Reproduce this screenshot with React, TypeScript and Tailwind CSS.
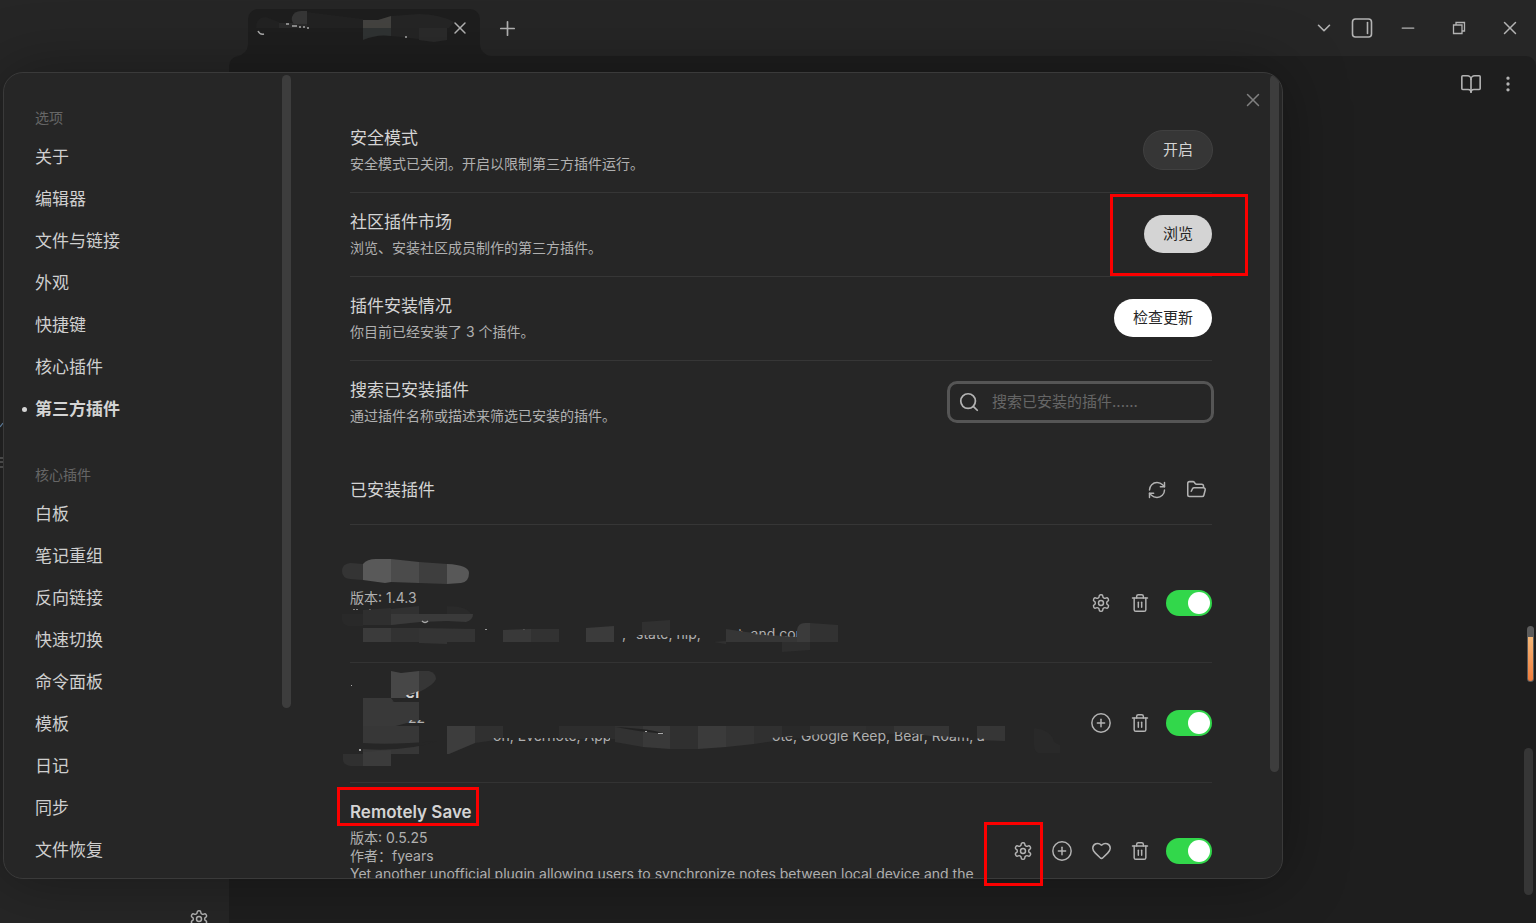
import React, { useState } from "react";
import {
  BookOpen,
  ChevronDown,
  CirclePlus,
  FolderOpen,
  Heart,
  Minus,
  MoreVertical,
  Plus,
  RefreshCw,
  Search,
  Trash2,
  X,
} from "lucide-react";

const optionItems = ["关于", "编辑器", "文件与链接", "外观", "快捷键", "核心插件", "第三方插件"];
const coreItems = ["白板", "笔记重组", "反向链接", "快速切换", "命令面板", "模板", "日记", "同步", "文件恢复"];

function Gear() {
  return (
    <svg width="20" height="20" viewBox="0 0 24 24" fill="none" stroke="currentColor" strokeWidth="1.75" strokeLinecap="round" strokeLinejoin="round" aria-hidden="true">
      <path d="M12.22 2h-.44a2 2 0 0 0-2 2v.18a2 2 0 0 1-1 1.73l-.43.25a2 2 0 0 1-2 0l-.15-.08a2 2 0 0 0-2.73.73l-.22.38a2 2 0 0 0 .73 2.73l.15.1a2 2 0 0 1 1 1.72v.51a2 2 0 0 1-1 1.74l-.15.09a2 2 0 0 0-.73 2.73l.22.38a2 2 0 0 0 2.73.73l.15-.08a2 2 0 0 1 2 0l.43.25a2 2 0 0 1 1 1.73V20a2 2 0 0 0 2 2h.44a2 2 0 0 0 2-2v-.18a2 2 0 0 1 1-1.73l.43-.25a2 2 0 0 1 2 0l.15.08a2 2 0 0 0 2.73-.73l.22-.39a2 2 0 0 0-.73-2.73l-.15-.08a2 2 0 0 1-1-1.74v-.5a2 2 0 0 1 1-1.74l.15-.09a2 2 0 0 0 .73-2.73l-.22-.38a2 2 0 0 0-2.73-.73l-.15.08a2 2 0 0 1-2 0l-.43-.25a2 2 0 0 1-1-1.73V4a2 2 0 0 0-2-2z" />
      <circle cx="12" cy="12" r="3" />
    </svg>
  );
}

function IconButton({ label, children }: { label: string; children: React.ReactNode }) {
  return (
    <button type="button" aria-label={label} className="flex h-8 w-8 items-center justify-center text-[#b3b3b3]">
      {children}
    </button>
  );
}

function Toggle({ label }: { label: string }) {
  const [on, setOn] = useState(true);
  return (
    <label
      className={
        on
          ? "relative ml-[3px] flex h-[26px] w-[46px] cursor-pointer items-center justify-end rounded-full bg-[#32d74b] p-[2px]"
          : "relative ml-[3px] flex h-[26px] w-[46px] cursor-pointer items-center rounded-full bg-[#4a4a4a] p-[2px]"
      }
    >
      <input type="checkbox" aria-label={label} checked={on} onChange={() => setOn(!on)} className="absolute inset-0 cursor-pointer opacity-0" />
      <span className="h-[22px] w-[22px] rounded-full bg-white" />
    </label>
  );
}

function NavGroup({ title, items, active }: { title: string; items: string[]; active?: string }) {
  return (
    <section>
      <h2 className="flex h-[34px] items-center pb-[2px] pl-[31px] text-[14px] text-[#666666]">{title}</h2>
      <ul>
        {items.map((item) => (
          <li key={item}>
            <button
              type="button"
              className={
                item === active
                  ? "flex h-[42px] w-full items-center pt-[3px] pl-[18px] text-[17px] font-bold text-[#d4d4d4]"
                  : "flex h-[42px] w-full items-center pt-[3px] pl-[31px] text-[17px] text-[#cfcfcf]"
              }
            >
              {item === active && <span className="mr-2 h-[5px] w-[5px] rounded-full bg-[#d4d4d4]" />}
              {item}
            </button>
          </li>
        ))}
      </ul>
    </section>
  );
}

function SettingRow({ title, desc, last, children }: { title: string; desc: string; last?: boolean; children: React.ReactNode }) {
  return (
    <div className={last ? "flex items-center justify-between border-b border-transparent pt-[17px] pb-[19px]" : "flex items-center justify-between border-b border-[#363636] pt-[17px] pb-[19px]"}>
      <div>
        <h3 className="text-[17px] leading-6 text-[#d4d4d4]">{title}</h3>
        <p className="mt-[5px] text-[14px] leading-[18px] text-[#b0b0b0]">{desc}</p>
      </div>
      {children}
    </div>
  );
}

function FirstPluginSmudge() {
  return (
    <svg className="pointer-events-none absolute top-0 -left-2" width="520" height="120" viewBox="342 543 520 120" fontFamily="Inter, sans-serif" fontSize="14" aria-hidden="true">
      <clipPath id="p1-title">
        <path d="M350 563 L363 564 Q367 559 376 559 L391 559 L419 562 L447 564 Q469 565 469 573 Q469 582 461 583 L447 584 L419 583 L391 582 L385 583 L363 580 L350 579 Q342 578 342 571 Q342 564 350 563Z" />
      </clipPath>
      <g clipPath="url(#p1-title)">
        <path fill="#343434" d="M342 555h21v32h-21z" />
        <path fill="#595959" d="M363 555h28v32h-28z" />
        <path fill="#4b4b4b" d="M391 555h28v32h-28z" />
        <path fill="#3e3e3e" d="M419 555h28v32h-28z" />
        <path fill="#585858" d="M447 555h22v32h-22z" />
      </g>
      <path fill="#888" d="M353 609h2v1h-2zM356 609h2v1h-2zM369 609h2v1h-2z" />
      <path fill="#292929" d="M342 614h21v12h-15q-6-2-6-6z" />
      <path fill="#2f2f2f" d="M363 610l28-2v17h-28z" />
      <path fill="#313131" d="M391 609l28-3v15l-28 4z" />
      <path fill="#2a2a2a" d="M447 606q20 0 24 8h-24z" />
      <path fill="#3a3a3a" d="M391 614h82q0 6-7 8l-19-1-27 1-29 3z" />
      <path fill="none" stroke="#aaa" strokeWidth="1.3" d="M422 621q3 3 6 0" />
      <path fill="#3b3b3b" d="M363 628h28v14h-28z" />
      <path fill="#323232" d="M391 628h28v14h-28z" />
      <path fill="#343434" d="M419 628l56 1v13h-28v2l-28-1z" />
      <path fill="#999" d="M485 629h2v1h-2zM523 629h2v1h-2zM530 629h2v1h-2z" />
      <path fill="#393939" d="M503 630l28-1v13h-28z" />
      <path fill="#323232" d="M531 629h28v13h-28z" />
      <path fill="#3b3b3b" d="M586 628l28-2v16h-28z" />
      <path fill="#303030" d="M642 622l28-2v16h-28z" />
      <clipPath id="p1-low">
        <path d="M618 635h86v9h-86z" />
      </clipPath>
      <g clipPath="url(#p1-low)" fill="#b0b0b0">
        <text x="622" y="639">,</text>
        <text x="636" y="639">state, nip,</text>
      </g>
      <path fill="#303030" d="M714 642l12-1v3z" />
      <path fill="#363636" d="M726 629l20 3 36 4h15v6h-71z" />
      <clipPath id="p1-high">
        <path d="M736 626h62v11l-22-1-22-2-18-4z" />
      </clipPath>
      <text x="738" y="639" fill="#b0b0b0" clipPath="url(#p1-high)">t, and com</text>
      <path fill="#3b3b3b" d="M797 642v-12q1-7 8-7h5v19z" />
      <path fill="#323232" d="M810 623l28 2v17h-28z" />
      <path fill="#2e2e2e" d="M782 642h28v8l-28 2z" />
    </svg>
  );
}

function SecondPluginSmudge() {
  return (
    <svg className="pointer-events-none absolute top-0 -left-2" width="720" height="120" viewBox="342 663 720 120" fontFamily="Inter, sans-serif" fontSize="14" aria-hidden="true">
      <path fill="#474747" d="M391 671l10 2 18-2v20l-14 7h-14z" />
      <path fill="#363636" d="M419 671h10q7 2 7 8-2 6-17 13z" />
      <path fill="#aaa" d="M351 685h1v1h-1zM367 742h1v1h-1zM359 749h2v2h-2z" />
      <path fill="#393939" d="M363 698h28l3 4h25v24h-56z" />
      <path fill="#262626" d="M392 702l20-4 8 2v2zM392 727l15-4h14v3z" />
      <path fill="#373737" d="M363 726h56v28h-56z" />
      <path fill="#262626" d="M363 743q30 2 74-2-30 11-74 8z" />
      <clipPath id="p2-name">
        <path d="M404 696l15-5v8h-15z" />
      </clipPath>
      <text x="405" y="698" fontSize="17" fontWeight="600" fill="#d4d4d4" clipPath="url(#p2-name)">er</text>
      <clipPath id="p2-version">
        <path d="M406 720h20v4h-20z" />
      </clipPath>
      <text x="408" y="723" fill="#b0b0b0" clipPath="url(#p2-version)">22</text>
      <path fill="#3b3b3b" d="M363 752l28-2v16h-28z" />
      <path fill="#303030" d="M343 754h20v12h-12q-8-1-8-6z" />
      <path fill="#3d3d3d" d="M447 726h28v17l-26 11h-2z" />
      <path fill="#303030" d="M475 726h28v13l-28 4z" />
      <path fill="#2d2d2d" d="M559 726h56v13h-56z" />
      <path fill="#323232" d="M615 726h28v21l-28-5z" />
      <path fill="#393939" d="M643 726h27v23l-27-2z" />
      <path fill="#303030" d="M670 726h28v23h-28z" />
      <path fill="#3b3b3b" d="M698 726h28v21l-28 2z" />
      <path fill="#353535" d="M726 726h28v18l-28 3z" />
      <path fill="#303030" d="M754 726h28v14l-28 4z" />
      <path fill="#292929" d="M782 726h28v11l-28 3z" />
      <path fill="#303030" d="M810 726h56v8l-56 3z" />
      <path fill="#2d2d2d" d="M866 726h28v8l-28-1z" />
      <path fill="#353535" d="M894 726h55v14q-20-6-55-7z" />
      <path fill="#363636" d="M977 726h28v15l-28-1z" />
      <path fill="#222222" d="M615 727q40 2 50 7-25-2-50-7z" />
      <path fill="#aaa" d="M645 731h2v1h-2zM658 733h5v1h-5z" />
      <clipPath id="p2-left">
        <path d="M490 738h120v7H490z" />
      </clipPath>
      <text x="493" y="741" fill="#b0b0b0" clipPath="url(#p2-left)">on, Evernote, App</text>
      <clipPath id="p2-right">
        <path d="M770 738l40-3 40-3h48l40 4 50 3v6H770z" />
      </clipPath>
      <text x="772" y="741" fill="#b0b0b0" clipPath="url(#p2-right)">ote, Google Keep, Bear, Roam, a</text>
      <path fill="#292929" d="M1034 728q18 2 20 14l6 3v8h-22q-4-2-4-8z" />
    </svg>
  );
}

function Modal() {
  return (
    <div role="dialog" aria-label="设置" className="absolute top-[72px] right-[253px] bottom-11 left-[3px] flex overflow-hidden rounded-[20px] border border-[#3a3a3a] bg-[#262626] shadow-[0_0_64px_rgba(0,0,0,0.35)]">
      <nav className="flex w-[287px] shrink-0 justify-between">
        <div className="flex flex-1 flex-col gap-[29px] pt-7">
          <NavGroup title="选项" items={optionItems} active="第三方插件" />
          <NavGroup title="核心插件" items={coreItems} />
        </div>
        <div className="mt-[2px] h-[633px] w-[9px] rounded-full bg-[#3d3d3d]" />
      </nav>

      <main className="min-w-0 flex-1 overflow-hidden pt-9 pr-[58px] pl-[59px]">
        <SettingRow title="安全模式" desc="安全模式已关闭。开启以限制第三方插件运行。">
          <button type="button" className="-mr-px h-10 rounded-full border border-[#404040] bg-[#363636] px-[19px] pt-px text-[15px] text-[#d4d4d4]">开启</button>
        </SettingRow>
        <SettingRow title="社区插件市场" desc="浏览、安装社区成员制作的第三方插件。">
          <button type="button" className="h-[38px] rounded-full bg-[#d4d4d4] px-[19px] pt-px text-[15px] text-[#262626]">浏览</button>
        </SettingRow>
        <SettingRow title="插件安装情况" desc="你目前已经安装了 3 个插件。">
          <button type="button" className="h-[38px] rounded-full bg-white px-[19px] pt-px text-[15px] text-[#262626]">检查更新</button>
        </SettingRow>
        <SettingRow title="搜索已安装插件" desc="通过插件名称或描述来筛选已安装的插件。" last>
          <label className="-my-2 -mr-[2px] flex h-[42px] w-[267px] items-center gap-3 rounded-[10px] border-[3px] border-[#555555] pl-2 text-[#b3b3b3]">
            <Search size={22} strokeWidth={1.9} className="shrink-0" />
            <input type="text" aria-label="搜索已安装插件" placeholder="搜索已安装的插件......" className="w-full min-w-0 bg-transparent pt-px text-[15px] text-[#d4d4d4] outline-none placeholder:text-[#666666]" />
          </label>
        </SettingRow>

        <div className="flex h-20 items-center justify-between border-b border-[#363636] pt-[10px]">
          <h3 className="text-[17px] leading-6 text-[#d4d4d4]">已安装插件</h3>
          <div className="flex gap-[7px]">
            <IconButton label="重新加载"><RefreshCw size={20} strokeWidth={1.75} /></IconButton>
            <IconButton label="打开文件夹"><FolderOpen size={21} strokeWidth={1.75} /></IconButton>
          </div>
        </div>

        <div className="relative mt-[18px] flex h-[120px] items-center justify-between border-b border-[#333333]">
          <p className="mt-[46px] self-start text-[14px] leading-[18px] text-[#b0b0b0]">版本: 1.4.3</p>
          <FirstPluginSmudge />
          <div className="flex items-center gap-[7px]">
            <IconButton label="设置"><Gear /></IconButton>
            <IconButton label="卸载"><Trash2 size={20} strokeWidth={1.75} /></IconButton>
            <Toggle label="启用插件" />
          </div>
        </div>

        <div className="relative flex h-[120px] items-center justify-end border-b border-[#333333]">
          <SecondPluginSmudge />
          <div className="flex items-center gap-[7px]">
            <IconButton label="添加快捷键"><CirclePlus size={22} strokeWidth={1.6} /></IconButton>
            <IconButton label="卸载"><Trash2 size={20} strokeWidth={1.75} /></IconButton>
            <Toggle label="启用插件" />
          </div>
        </div>

        <div className="flex items-center justify-between pt-[17px] pb-[18px]">
          <div>
            <h3 className="text-[17px] leading-6 font-semibold text-[#d4d4d4]">Remotely Save</h3>
            <div className="mt-[5px] text-[14px] leading-[18px] whitespace-nowrap text-[#b0b0b0]">
              <p>版本: 0.5.25</p>
              <p>作者：fyears</p>
              <p className="min-h-9">Yet another unofficial plugin allowing users to synchronize notes between local device and the</p>
            </div>
          </div>
          <div className="flex items-center gap-[7px]">
            <IconButton label="设置"><Gear /></IconButton>
            <IconButton label="添加快捷键"><CirclePlus size={22} strokeWidth={1.6} /></IconButton>
            <IconButton label="赞助"><Heart size={21} strokeWidth={1.75} /></IconButton>
            <IconButton label="卸载"><Trash2 size={20} strokeWidth={1.75} /></IconButton>
            <Toggle label="启用 Remotely Save" />
          </div>
        </div>
      </main>
      <div className="mt-[2px] mr-[3px] h-[697px] w-[9px] shrink-0 rounded-full bg-[#3d3d3d]" />
      <button type="button" aria-label="关闭" className="absolute top-4 right-[18px] flex h-[22px] w-[22px] items-center justify-center text-[#808080]">
        <X size={22} strokeWidth={1.6} />
      </button>
    </div>
  );
}

export default function App() {
  return (
    <div className="relative flex h-screen flex-col overflow-hidden bg-[#262626] font-['Inter','Noto_Sans_CJK_SC',sans-serif]">
      <header className="flex h-14 shrink-0 items-end text-[#b3b3b3]">
        <div className="relative ml-[248px] h-[47px] w-[232px] rounded-t-[10px] bg-[#1e1e1e]">
          <svg className="absolute bottom-0 -left-3" width="12" height="12" viewBox="0 0 12 12" aria-hidden="true"><path d="M12 0A12 12 0 0 1 0 12H12Z" fill="#1e1e1e" /></svg>
          <svg className="absolute -right-3 bottom-0" width="12" height="12" viewBox="0 0 12 12" aria-hidden="true"><path d="M0 0A12 12 0 0 0 12 12H0Z" fill="#1e1e1e" /></svg>
          <svg className="absolute top-0 left-0" width="232" height="47" viewBox="248 9 232 47" aria-hidden="true">
            <path fill="#222222" d="M256 28q0-11 10-11l13 5v6z" />
            <path fill="#2a2a2a" d="M279 23h28v5h-28z" />
            <path fill="#363636" d="M307 11v13h-13q-3-3-2-7 2-6 9-6z" />
            <path fill="#222222" d="M307 12l56 7v9h-56z" />
            <path fill="#444340" d="M363 20h15l13-4v12h-28z" />
            <path fill="#303333" d="M363 28h28v8q-14-2-28 4z" />
            <path fill="#252525" d="M391 16l28-2v14h-28zM419 14q20 0 35 8l-5 6h-30zM391 28h28v11l-28-3z" />
            <path fill="#2b2b2b" d="M419 28h28v12l-13 2-15-2z" />
            <path d="M258 31q2 4 6 3" fill="none" stroke="#aaa" strokeWidth="1.5" />
            <path d="M286 24h3M292 26h5M299 27h2M303 27h2M307 28h2M405 37h2" stroke="#aaa" strokeWidth="1.3" />
          </svg>
          <button type="button" aria-label="关闭标签页" className="absolute top-[9px] right-[10px]"><X size={20} strokeWidth={1.75} /></button>
        </div>
        <div className="flex h-full flex-1 items-center pl-4">
          <button type="button" aria-label="新标签页"><Plus size={23} strokeWidth={1.75} /></button>
        </div>
        <div className="flex h-full items-center pr-[15px]">
          <button type="button" aria-label="标签列表"><ChevronDown size={22} strokeWidth={1.75} /></button>
          <button type="button" aria-label="切换右侧栏" className="ml-4">
            <svg width="22" height="22" viewBox="0 0 22 22" fill="none" stroke="currentColor" strokeWidth="1.6" aria-hidden="true">
              <rect x="1.5" y="2" width="19" height="18" rx="3" />
              <path d="M16.5 5.5v11" strokeLinecap="round" />
            </svg>
          </button>
          <button type="button" aria-label="最小化" className="ml-[25px]"><Minus size={20} strokeWidth={1.5} /></button>
          <button type="button" aria-label="还原" className="ml-[34px]">
            <svg width="14" height="14" viewBox="0 0 14 14" fill="none" stroke="currentColor" strokeWidth="1.3" aria-hidden="true">
              <path d="M1.5 4h8.5v8.5H1.5zM4 4V1.5h8.5V10H10" />
            </svg>
          </button>
          <button type="button" aria-label="关闭窗口" className="ml-[33px]"><X size={22} strokeWidth={1.6} /></button>
        </div>
      </header>

      <div className="flex min-h-0 flex-1">
        <aside className="flex w-[229px] shrink-0 flex-col justify-end">
          <div className="flex h-[14px] items-start justify-end overflow-hidden pr-5 text-[#b3b3b3]">
            <button type="button" aria-label="打开设置"><Gear /></button>
          </div>
        </aside>
        <section className="flex flex-1 justify-end rounded-t-[10px] bg-[#1e1e1e]">
          <div className="flex h-14 items-center gap-4 pr-[18px] text-[#b3b3b3]">
            <button type="button" aria-label="阅读视图"><BookOpen size={22} strokeWidth={1.75} /></button>
            <button type="button" aria-label="更多选项"><MoreVertical size={20} strokeWidth={2} /></button>
          </div>
        </section>
      </div>

      <svg className="absolute top-[414px] left-0" width="4" height="56" viewBox="0 0 4 56" aria-hidden="true">
        <path d="M0 13l3-4" stroke="#6d93b8" strokeWidth="1.2" />
        <path d="M0 44h3M0 48h3M0 53h3" stroke="#888" strokeWidth="1" />
      </svg>
      <div className="absolute top-[626px] right-[2px] h-14 w-[7px] rounded-full bg-[#5c5c5c] px-px pt-[11px] pb-px">
        <div className="h-full rounded-b-full bg-linear-to-b from-[#f5b878] to-[#f07c3a]" />
      </div>
      <div className="absolute right-[3px] bottom-7 h-[147px] w-[9px] rounded-full bg-[#363636]" />

      <Modal />

      <div className="pointer-events-none absolute top-[194px] right-[288px] h-[82px] w-[138px] border-[3px] border-[#fb0000]" />
      <div className="pointer-events-none absolute top-[787px] left-[337px] h-[39px] w-[142px] border-[3px] border-[#fb0000]" />
      <div className="pointer-events-none absolute top-[822px] right-[493px] h-16 w-[59px] border-[3px] border-[#fb0000]" />
    </div>
  );
}
